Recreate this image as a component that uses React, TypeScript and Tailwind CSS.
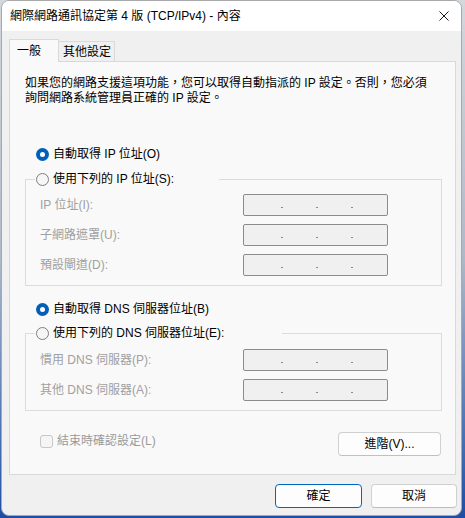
import React from "react";

function Radio({ checked }: { checked?: boolean }) {
  return checked ? (
    <span className="flex h-[13px] w-[13px] shrink-0 items-center justify-center rounded-full bg-[#005fb8]">
      <span className="h-[5px] w-[5px] rounded-full bg-white" />
    </span>
  ) : (
    <span className="h-[13px] w-[13px] shrink-0 rounded-full border border-[#7f7f7f] bg-[#f6f6f6]" />
  );
}

function IpBox() {
  return (
    <div className="flex h-[22px] w-[145px] items-center rounded-[2px] border border-[#8c8c8c] bg-[#f0f0f0] pl-[37px]">
      <span className="mt-[5px] h-[1px] w-[2px] bg-[#8a8a8a]" />
      <span className="ml-[33px] mt-[5px] h-[1px] w-[2px] bg-[#8a8a8a]" />
      <span className="ml-[33px] mt-[5px] h-[1px] w-[2px] bg-[#8a8a8a]" />
    </div>
  );
}

function FieldRow({ label }: { label: string }) {
  return (
    <div className="flex h-[22px] items-center justify-between">
      <span className="text-[#a0a0a0]">{label}</span>
      <IpBox />
    </div>
  );
}

function Group({
  title,
  width,
  rows,
  top
}: {
  title: string,
  width: string,
  rows: string[],
  top: string
}) {
  return (
    <fieldset className="m-0 border border-[#dcdcdc] p-0">
      <legend className={`ml-[9px] flex h-[16px] items-center gap-[4px] p-0 pl-[1px] ${width}`}>
        <Radio />
        <span className="whitespace-nowrap">{title}</span>
      </legend>
      <div className={`flex flex-col gap-[8px] pb-[9px] pl-[14px] pr-[53px] ${top}`}>
        {rows.map(r => (
          <FieldRow label={r} key={r} />
        ))}
      </div>
    </fieldset>
  );
}

export default function App() {
  return (
    <div className="h-[518px] w-[465px] bg-gradient-to-b from-[#d4d8dd] via-[#aeb9c8] to-[#1c4ea6] font-['Liberation_Sans','Noto_Sans_CJK_TC',sans-serif] text-[12px] leading-[16px] text-black">
      <div className="ml-[1px] flex h-[516px] w-[461px] flex-col overflow-hidden rounded-[8px] border border-[#a9a9a9] bg-[#f0f0f0]">
        {/* title bar */}
        <div className="flex h-[30px] shrink-0 items-center justify-between bg-white pl-[8px] pr-[10px]">
          <span>網際網路通訊協定第 4 版 (TCP/IPv4) - 內容</span>
          <svg width="10" height="10" viewBox="0 0 10 10" className="mr-[2px]">
            <path d="M0.5 0.5 L9.5 9.5 M9.5 0.5 L0.5 9.5" stroke="#1a1a1a" strokeWidth="1" />
          </svg>
        </div>

        {/* tabs */}
        <div className="mt-[8px] flex items-end pl-[7px]">
          <div className="relative z-10 -mb-[1px] flex h-[23px] w-[50px] items-center border border-b-0 border-[#d9d9d9] bg-[#f9f9f9] pl-[7px]">
            一般
          </div>
          <div className="flex h-[20px] w-[56px] items-center border border-b-0 border-l-0 border-[#d9d9d9] bg-[#f0f0f0] pl-[4px]">
            其他設定
          </div>
        </div>

        {/* panel */}
        <div className="ml-[7px] flex h-[414px] w-[447px] flex-col border border-[#d9d9d9] bg-[#f9f9f9] pl-[15px] pr-[13px] pt-[14px]">
          <p className="whitespace-nowrap leading-[15px]">
            如果您的網路支援這項功能，您可以取得自動指派的 IP 設定。否則，您必須
            <br />
            詢問網路系統管理員正確的 IP 設定。
          </p>

          <div className="mt-[40px] flex h-[16px] items-center gap-[4px] pl-[11px]">
            <Radio checked />
            <span>自動取得 IP 位址(O)</span>
          </div>
          <div className="mt-[9px]">
            <Group
              title="使用下列的 IP 位址(S):"
              width="w-[184px]"
              top="pt-[7px]"
              rows={["IP 位址(I):", "子網路遮罩(U):", "預設閘道(D):"]}
            />
          </div>

          <div className="mt-[15px] flex h-[16px] items-center gap-[4px] pl-[11px]">
            <Radio checked />
            <span>自動取得 DNS 伺服器位址(B)</span>
          </div>
          <div className="mt-[8px]">
            <Group
              title="使用下列的 DNS 伺服器位址(E):"
              width="w-[247px]"
              top="pt-[8px]"
              rows={["慣用 DNS 伺服器(P):", "其他 DNS 伺服器(A):"]}
            />
          </div>

          <div className="mt-[21px] flex items-start justify-between pl-[15px] pr-[1px]">
            <div className="mt-[1px] flex items-center gap-[4px]">
              <span className="h-[13px] w-[13px] rounded-[3px] border border-[#c8c8c8] bg-[#f5f5f5]" />
              <span className="text-[#9a9a9a]">結束時確認設定(L)</span>
            </div>
            <button className="flex h-[24px] w-[103px] items-center justify-center rounded-[4px] border border-[#d0d0d0] border-b-[#c0c0c0] bg-[#fdfdfd]">
              進階(V)...
            </button>
          </div>
        </div>

        {/* buttons */}
        <div className="mt-[9px] flex justify-end gap-[9px] pr-[4px]">
          <button className="flex h-[24px] w-[87px] items-center justify-center rounded-[4px] border border-[#0067c0] bg-[#fdfdfd]">
            確定
          </button>
          <button className="flex h-[24px] w-[86px] items-center justify-center rounded-[4px] border border-[#d0d0d0] border-b-[#bdbdbd] bg-[#fdfdfd]">
            取消
          </button>
        </div>
      </div>
    </div>
  );
}
